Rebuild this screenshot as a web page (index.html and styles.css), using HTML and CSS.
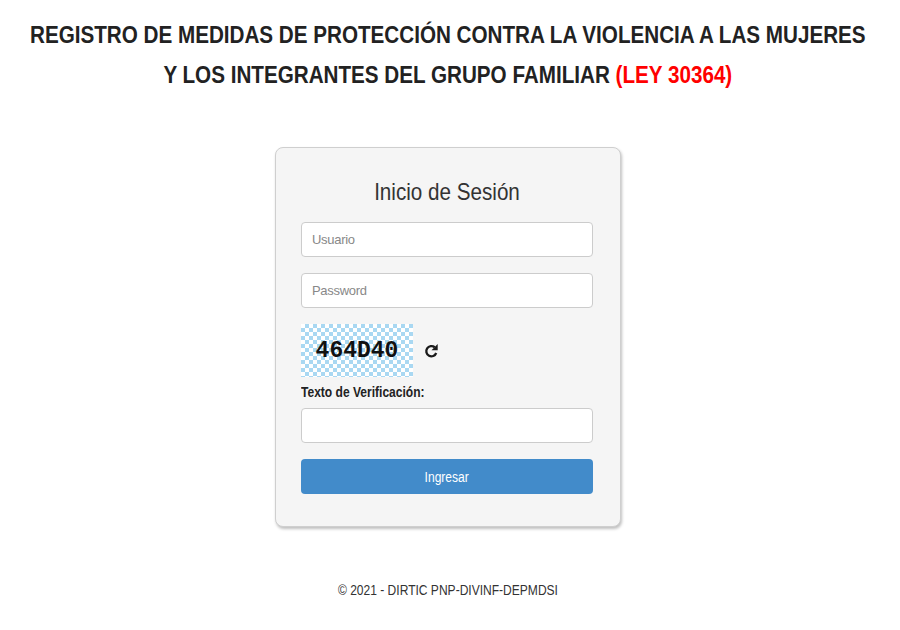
FILE: index.html
```html
<!DOCTYPE html>
<html lang="es">
<head>
  <meta charset="UTF-8" />
  <title>Registro de Medidas de Protección - Ley 30364</title>
  <link rel="stylesheet" href="styles.css">
</head>
<body>

  <h1 class="title">
    REGISTRO DE MEDIDAS DE PROTECCIÓN CONTRA LA VIOLENCIA A LAS MUJERES<br>
    Y LOS INTEGRANTES DEL GRUPO FAMILIAR <span class="ley">(LEY 30364)</span>
  </h1>

  <div class="login-box">
    <h2>Inicio de Sesión</h2>

    <input type="text" class="field" placeholder="Usuario" />
    <input type="password" class="field" placeholder="Password" />

    <div class="captcha-row">
      <div class="captcha">464D40</div>
      <svg class="refresh" width="15" height="16" viewBox="0 0 14 15">
        <path d="M11.4 9.4A4.8 4.8 0 1 1 10 4" fill="none" stroke="#1a1a1a" stroke-width="2.2"/>
        <path d="M12.8 1v5.8H7z" fill="#1a1a1a"/>
      </svg>
    </div>

    <label class="label"><span>Texto de Verificación:</span></label>
    <input type="text" class="field" />

    <button class="btn"><span>Ingresar</span></button>
  </div>

  <div class="footer">© 2021 - DIRTIC PNP-DIVINF-DEPMDSI</div>

</body>
</html>
```

FILE: styles.css
```css
body {
  margin: 0;
  padding-right: 4px;
  font-family: "Liberation Sans", Arial, sans-serif;
  background: #fff;
  color: #333;
  display: flex;
  flex-direction: column;
  align-items: center;
}

/* the original page renders its text condensed */
.title,
h2,
.footer,
.btn span {
  transform: scaleX(0.86);
}

.title {
  margin: 15px 0 0;
  width: max-content;
  font-size: 24px;
  line-height: 40px;
  font-weight: bold;
  color: #222;
  text-align: center;
}

.ley {
  color: #f00;
}

.login-box {
  margin-top: 52px;
  width: 346px;
  box-sizing: border-box;
  padding: 30px 27px 32px 25px;
  background: #f5f5f5;
  border: 1px solid #cfcfcf;
  border-radius: 8px;
  box-shadow: 1px 2px 3px rgba(0,0,0,0.25);
  display: flex;
  flex-direction: column;
}

h2 {
  margin: 0 0 16px;
  font-size: 24px;
  font-weight: normal;
  color: #333;
  text-align: center;
}

.field {
  height: 35px;
  box-sizing: border-box;
  padding: 6px 10px;
  border: 1px solid #ccc;
  border-radius: 4px;
  font-family: inherit;
  font-size: 13px;
  letter-spacing: -0.3px;
  margin-bottom: 16px;
  background: #fff;
}

.field::placeholder {
  color: #888;
}

.captcha-row {
  display: flex;
  align-items: center;
  gap: 11px;
}

.captcha {
  width: 112px;
  height: 53px;
  display: flex;
  align-items: center;
  justify-content: center;
  font-family: "Liberation Mono", monospace;
  font-weight: bold;
  font-size: 23px;
  color: #111;
  background-color: #fff;
  background-image:
    linear-gradient(45deg, #a9d8f2 25%, transparent 25%, transparent 75%, #a9d8f2 75%),
    linear-gradient(45deg, #a9d8f2 25%, transparent 25%, transparent 75%, #a9d8f2 75%);
  background-size: 8px 8px;
  background-position: 0 0, 4px 4px;
}

.refresh {
  margin-top: 1px;
}

.label {
  margin: 7px 0 8px;
  font-size: 14px;
  font-weight: bold;
  color: #222;
}

.label span {
  display: inline-block;
  transform: scaleX(0.86);
  transform-origin: left center;
}

.btn {
  height: 35px;
  border: none;
  border-radius: 4px;
  background: #428bca;
  color: #fff;
  font-family: inherit;
  font-size: 14px;
  cursor: pointer;
}

.btn span {
  display: inline-block;
}

.footer {
  margin-top: 55px;
  font-size: 14px;
  color: #333;
}
```
